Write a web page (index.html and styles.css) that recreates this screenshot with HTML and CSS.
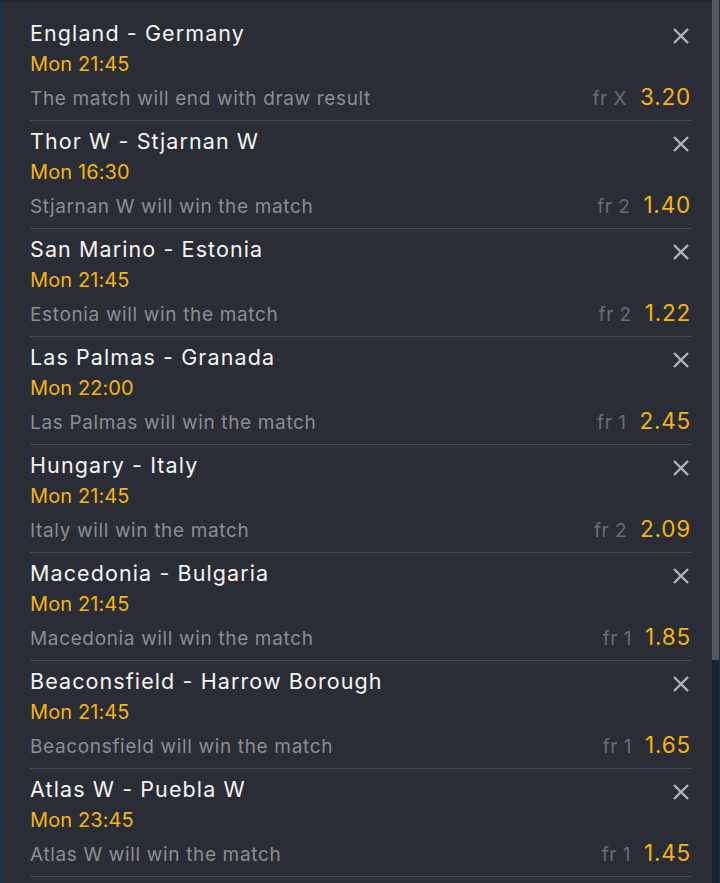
FILE: index.html
```html
<!DOCTYPE html>
<html>
<head>
<meta charset="utf-8">
<link rel="stylesheet" href="styles.css">
</head>
<body>
<div class="screen">
  <div class="edge"></div>
  <div class="panel">
    <div class="row">
      <div class="top"><div class="teams">England - Germany</div><svg class="close" viewBox="0 0 18 18"><path d="M2 2L16 16M16 2L2 16"/></svg></div>
      <div class="time">Mon 21:45</div>
      <div class="bottom"><div class="desc">The match will end with draw result</div><div class="odds"><span class="fr">fr X</span><span class="val">3.20</span></div></div>
    </div>
    <div class="row">
      <div class="top"><div class="teams">Thor W - Stjarnan W</div><svg class="close" viewBox="0 0 18 18"><path d="M2 2L16 16M16 2L2 16"/></svg></div>
      <div class="time">Mon 16:30</div>
      <div class="bottom"><div class="desc">Stjarnan W will win the match</div><div class="odds"><span class="fr">fr 2</span><span class="val">1.40</span></div></div>
    </div>
    <div class="row">
      <div class="top"><div class="teams">San Marino - Estonia</div><svg class="close" viewBox="0 0 18 18"><path d="M2 2L16 16M16 2L2 16"/></svg></div>
      <div class="time">Mon 21:45</div>
      <div class="bottom"><div class="desc">Estonia will win the match</div><div class="odds"><span class="fr">fr 2</span><span class="val">1.22</span></div></div>
    </div>
    <div class="row">
      <div class="top"><div class="teams">Las Palmas - Granada</div><svg class="close" viewBox="0 0 18 18"><path d="M2 2L16 16M16 2L2 16"/></svg></div>
      <div class="time">Mon 22:00</div>
      <div class="bottom"><div class="desc">Las Palmas will win the match</div><div class="odds"><span class="fr">fr 1</span><span class="val">2.45</span></div></div>
    </div>
    <div class="row">
      <div class="top"><div class="teams">Hungary - Italy</div><svg class="close" viewBox="0 0 18 18"><path d="M2 2L16 16M16 2L2 16"/></svg></div>
      <div class="time">Mon 21:45</div>
      <div class="bottom"><div class="desc">Italy will win the match</div><div class="odds"><span class="fr">fr 2</span><span class="val">2.09</span></div></div>
    </div>
    <div class="row">
      <div class="top"><div class="teams">Macedonia - Bulgaria</div><svg class="close" viewBox="0 0 18 18"><path d="M2 2L16 16M16 2L2 16"/></svg></div>
      <div class="time">Mon 21:45</div>
      <div class="bottom"><div class="desc">Macedonia will win the match</div><div class="odds"><span class="fr">fr 1</span><span class="val">1.85</span></div></div>
    </div>
    <div class="row">
      <div class="top"><div class="teams">Beaconsfield - Harrow Borough</div><svg class="close" viewBox="0 0 18 18"><path d="M2 2L16 16M16 2L2 16"/></svg></div>
      <div class="time">Mon 21:45</div>
      <div class="bottom"><div class="desc">Beaconsfield will win the match</div><div class="odds"><span class="fr">fr 1</span><span class="val">1.65</span></div></div>
    </div>
    <div class="row">
      <div class="top"><div class="teams">Atlas W - Puebla W</div><svg class="close" viewBox="0 0 18 18"><path d="M2 2L16 16M16 2L2 16"/></svg></div>
      <div class="time">Mon 23:45</div>
      <div class="bottom"><div class="desc">Atlas W will win the match</div><div class="odds"><span class="fr">fr 1</span><span class="val">1.45</span></div></div>
    </div>
  </div>
  <div class="scrollbar"><div class="thumb"></div></div>
</div>
</body>
</html>
```

FILE: styles.css
```css
html, body {
  margin: 0;
  padding: 0;
  background: #142236;
}
body {
  font-family: "Inter", "Lato", sans-serif;
}
.screen {
  display: flex;
  width: 720px;
  height: 883px;
  overflow: hidden;
}
.edge {
  width: 2px;
  background: #12304f;
  flex: none;
}
.panel {
  width: 710px;
  flex: none;
  background: #2a2d35;
  padding-top: 11px;
  box-sizing: border-box;
  border-top: 2px solid #24272e;
}
.row {
  margin: 0 21px 0 28px;
  height: 108px;
  box-sizing: border-box;
  border-bottom: 1px solid #464950;
  display: flex;
  flex-direction: column;
}
.top {
  display: flex;
  justify-content: space-between;
  align-items: center;
  height: 30px;
  margin-top: 5px;
}
.teams {
  color: #f4f4f4;
  font-size: 21.5px;
  letter-spacing: 1.1px;
}
.close {
  width: 18px;
  height: 18px;
  margin-right: 1px;
  margin-top: 5px;
  fill: none;
  stroke: #b2b3b6;
  stroke-width: 2.4;
}
.time {
  color: #f5b50f;
  font-size: 20px;
  height: 30px;
  line-height: 30px;
  margin-top: 1px;
  letter-spacing: 0.1px;
}
.bottom {
  display: flex;
  justify-content: space-between;
  align-items: baseline;
  margin-top: 4px;
}
.desc {
  color: #8c8e93;
  font-size: 19px;
  letter-spacing: 0.65px;
}
.odds {
  display: flex;
  align-items: baseline;
}
.fr {
  color: #6b6e74;
  font-size: 19px;
  margin-right: 13px;
  letter-spacing: 0.5px;
}
.val {
  color: #f5b50f;
  font-size: 22.5px;
  letter-spacing: 0.8px;
}
.scrollbar {
  width: 7px;
  flex: none;
  background: #1b2231;
  border-right: 1px solid #1a3050;
}
.thumb {
  height: 660px;
  background: #55575d;
}
```
